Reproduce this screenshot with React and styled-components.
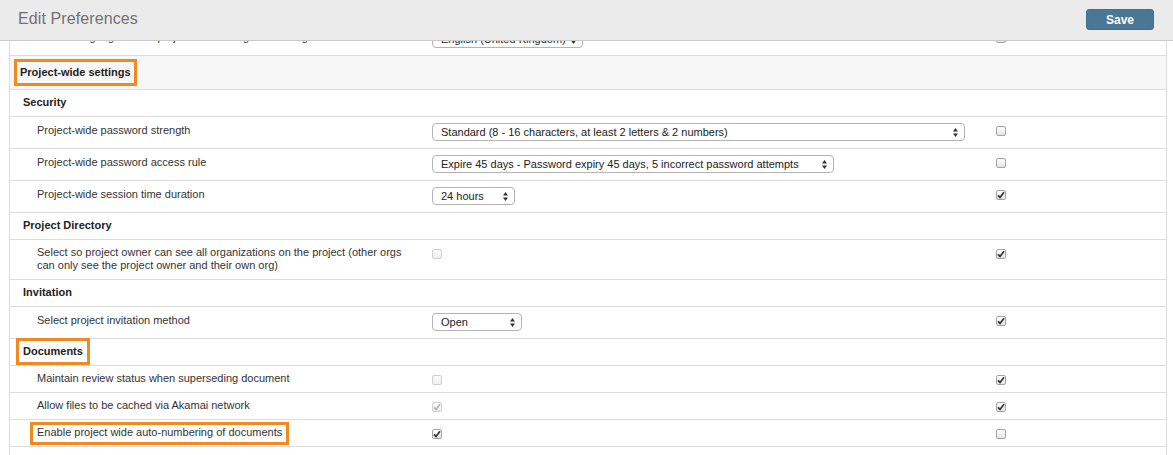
import React from 'react'
import styled, { createGlobalStyle } from 'styled-components'

const GlobalStyle = createGlobalStyle`
  html, body { margin: 0; padding: 0; background: #fff; }
  body { font-family: "Liberation Sans", Arial, Helvetica, sans-serif; }
  * { box-sizing: border-box; }
`

const Page = styled.div`
  width: 100%;
  height: 455px;
  display: flex;
  flex-direction: column;
  overflow: hidden;
  background: #fff;
`

const Header = styled.div`
  flex: 0 0 41px;
  height: 41px;
  display: flex;
  align-items: center;
  justify-content: space-between;
  padding: 0 19px 2px 18px;
  background: #ebebeb;
  border-bottom: 1px solid #c9c9c9;
  position: relative;
  z-index: 2;
`

const Title = styled.div`
  font-size: 16px;
  color: #717171;
  letter-spacing: 0.1px;
`

const SaveButton = styled.button`
  width: 68px;
  height: 21px;
  margin-top: 1px;
  border: 1px solid #456f8c;
  border-radius: 3px;
  background: #4b7797;
  color: #fff;
  font-family: inherit;
  font-size: 12px;
  font-weight: bold;
  padding: 0;
`

const Viewport = styled.div`
  flex: 1;
  overflow: hidden;
  margin: 0 6px 0 9px;
  border-left: 1px solid #dcdcdc;
  border-right: 1px solid #dcdcdc;
`

const Table = styled.div`
  margin-top: -17px;
`

const Row = styled.div`
  display: flex;
  align-items: flex-start;
  padding: ${p => (p.$section ? '10px 0' : '6px 0 7px')};
  background: ${p => (p.$section ? '#f7f7f7' : '#fff')};
  border-bottom: 1px solid #dcdcdc;
  font-size: 11px;
  line-height: 13px;
  color: #333;
`

const LabelCell = styled.div`
  flex: 0 0 422px;
  padding-left: ${p => p.$indent}px;
  padding-right: 30px;
  padding-top: ${p => (p.$low ? '1px' : '0')};
  font-weight: ${p => (p.$bold ? 'bold' : 'normal')};
  color: ${p => (p.$bold ? '#222' : '#333')};
`

const ControlCell = styled.div`
  flex: 0 0 564px;
  display: flex;
  align-items: flex-start;
  padding-top: ${p => (p.$box ? '3px' : '0')};
`

const LastCell = styled.div`
  flex: 1;
  display: flex;
  align-items: flex-start;
  padding-top: 3px;
`

const Highlight = styled.span`
  position: relative;
  display: inline-block;
  &::after {
    content: '';
    position: absolute;
    top: -${p => p.$t}px;
    bottom: -${p => p.$b}px;
    left: -${p => p.$l}px;
    right: -${p => p.$r}px;
    border: 3px solid #f0891f;
    pointer-events: none;
  }
`

const SelectBox = styled.div`
  height: 18px;
  width: ${p => p.$w}px;
  display: flex;
  align-items: center;
  justify-content: space-between;
  padding: 0 6px 0 8px;
  border: 1px solid #b3b3b3;
  border-radius: 4px;
  background: #fff;
  color: #222;
  font-size: 11px;
  white-space: nowrap;
`

const Box = styled.span`
  width: 10px;
  height: 10px;
  display: inline-flex;
  align-items: center;
  justify-content: center;
  border: 1px solid ${p => (p.$disabled ? '#d0d0d0' : '#a3a3a3')};
  border-radius: 2px;
  background: ${p =>
    p.$disabled
      ? 'linear-gradient(#fafafa, #f0f0f0)'
      : 'linear-gradient(#fdfdfd, #e6e6e6)'};
`

const Arrows = () => (
  <svg width="5" height="9" viewBox="0 0 5 9">
    <path d="M2.5 0 L5 3.4 L0 3.4 Z M2.5 9 L5 5.6 L0 5.6 Z" fill="#333" />
  </svg>
)

const Select = ({ width, children }) => (
  <SelectBox $w={width}>
    <span>{children}</span>
    <Arrows />
  </SelectBox>
)

const Check = ({ checked, disabled }) => (
  <Box $disabled={disabled}>
    {checked && (
      <svg width="8" height="8" viewBox="0 0 8 8">
        <path
          d="M1 4.4 L3 6.4 L7 1.2"
          fill="none"
          stroke={disabled ? '#b5b5b5' : '#333'}
          strokeWidth="1.7"
        />
      </svg>
    )}
  </Box>
)

const Setting = ({ label, control, last, box }) => (
  <Row>
    <LabelCell $indent={27} $low={!box}>{label}</LabelCell>
    <ControlCell $box={box}>{control}</ControlCell>
    <LastCell>{last}</LastCell>
  </Row>
)

const Group = ({ children }) => (
  <Row>
    <LabelCell $indent={13} $bold>{children}</LabelCell>
  </Row>
)

export default function App() {
  return (
    <Page>
      <GlobalStyle />
      <Header>
        <Title>Edit Preferences</Title>
        <SaveButton>Save</SaveButton>
      </Header>
      <Viewport>
        <Table>
          <Setting
            label="Default language for the project and the regional setting"
            control={<Select width={151}>English (United Kingdom)</Select>}
            last={<Check />}
          />
          <Row $section>
            <LabelCell $indent={10} $bold>
              <Highlight $t={7} $b={7} $l={6} $r={6}>Project-wide settings</Highlight>
            </LabelCell>
          </Row>

          <Group>Security</Group>
          <Setting
            label="Project-wide password strength"
            control={<Select width={533}>Standard (8 - 16 characters, at least 2 letters &amp; 2 numbers)</Select>}
            last={<Check />}
          />
          <Setting
            label="Project-wide password access rule"
            control={<Select width={402}>Expire 45 days - Password expiry 45 days, 5 incorrect password attempts</Select>}
            last={<Check />}
          />
          <Setting
            label="Project-wide session time duration"
            control={<Select width={83}>24 hours</Select>}
            last={<Check checked />}
          />

          <Group>Project Directory</Group>
          <Setting
            box
            label="Select so project owner can see all organizations on the project (other orgs can only see the project owner and their own org)"
            control={<Check disabled />}
            last={<Check checked />}
          />

          <Group>Invitation</Group>
          <Setting
            label="Select project invitation method"
            control={<Select width={90}>Open</Select>}
            last={<Check checked />}
          />

          <Group>
            <Highlight $t={7} $b={7} $l={7} $r={7}>Documents</Highlight>
          </Group>
          <Setting
            box
            label="Maintain review status when superseding document"
            control={<Check disabled />}
            last={<Check checked />}
          />
          <Setting
            box
            label="Allow files to be cached via Akamai network"
            control={<Check disabled checked />}
            last={<Check checked />}
          />
          <Setting
            box
            label={
              <Highlight $t={4} $b={6} $l={7} $r={7}>
                Enable project wide auto-numbering of documents
              </Highlight>
            }
            control={<Check checked />}
            last={<Check />}
          />
        </Table>
      </Viewport>
    </Page>
  )
}
